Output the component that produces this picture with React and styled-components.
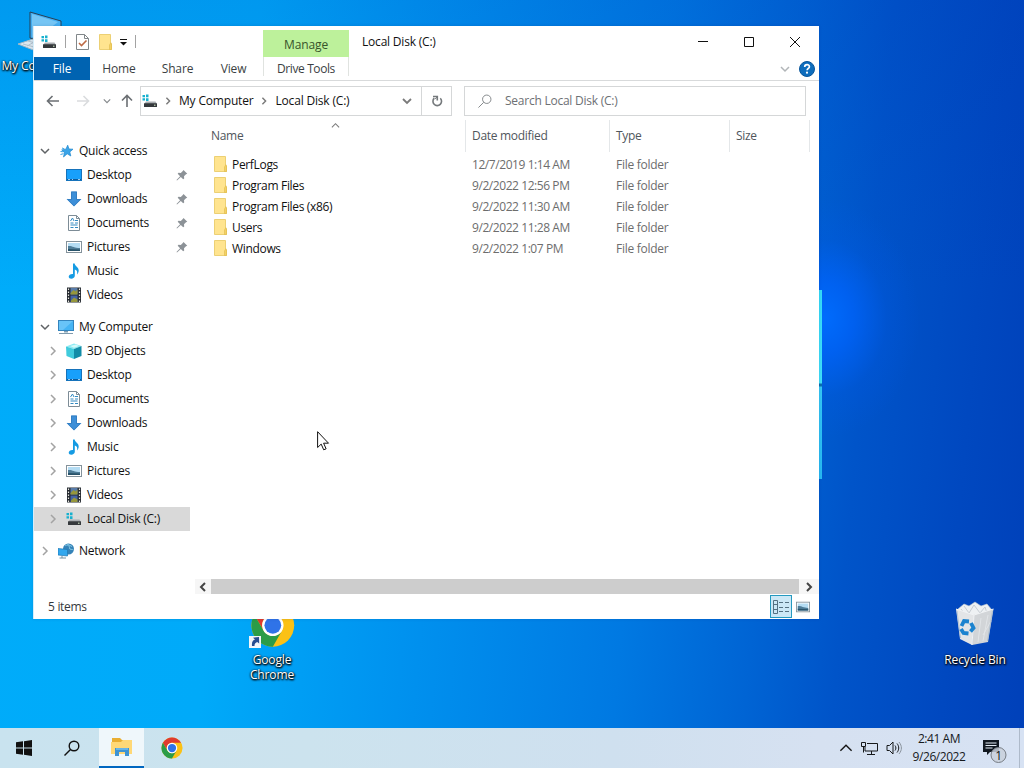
import React from 'react';
import styled, { createGlobalStyle } from 'styled-components';

const GlobalStyle = createGlobalStyle`
  * {
    box-sizing: border-box;
  }

  body {
    margin: 0;
    overflow: hidden;
    font-family: 'Open Sans', 'Noto Sans', sans-serif;
    font-size: 12px;
    line-height: 16px;
    letter-spacing: -0.12px;
    color: #111;
  }

  svg {
    display: block;
    flex: none;
  }
`;

const Screen = styled.div`
  position: relative;
  width: 1024px;
  height: 768px;
  display: flex;
  flex-direction: column;
  overflow: hidden;
  background:
    radial-gradient(ellipse 95px 120px at 825px 318px, rgba(0, 108, 255, 0.95) 0%, rgba(0, 100, 255, 0.7) 30%, rgba(0, 90, 235, 0.25) 65%, rgba(0, 85, 225, 0) 100%),
    linear-gradient(180deg, rgba(0, 50, 180, 0.15) 0%, rgba(0, 50, 180, 0) 38%),
    linear-gradient(95deg, #00acfa 0%, #00aaf9 24%, #0092ef 42%, #0079e2 62%, #0064d4 74%, #0054c9 82%, #0048c0 92%, #0040b9 100%);
`;

const DesktopArea = styled.main`
  position: relative;
  flex: 1;
`;

const Shortcut = styled.div`
  position: absolute;
  left: ${props => props.$x}px;
  top: ${props => props.$y}px;
  width: 76px;
  display: flex;
  flex-direction: column;
  align-items: center;
  color: #fff;
  line-height: 15px;
  text-align: center;
  text-shadow: 1px 1px 2px #000, 0 1px 2px #000, 0 0 2px rgba(0, 0, 0, 0.8);

  svg {
    margin-bottom: ${props => props.$gap || 3}px;
  }
`;

const LogoEdge = styled.div`
  position: absolute;
  left: 819px;
  top: 290px;
  width: 3px;
  height: 189px;
  background: linear-gradient(180deg, #35dcf8 0, #40e0fa 93px, #0b6fae 94px, #0b6fae 96px, #35c8f5 97px, #27b9f2 100%);
`;

const Window = styled.section`
  position: absolute;
  left: 33px;
  top: 26px;
  width: 786px;
  height: 593px;
  display: flex;
  flex-direction: column;
  background: #fff;
  border-left: 1px solid #d4eefb;
  box-shadow: 0 0 3px rgba(0, 30, 90, 0.15);
`;

const Ribbon = styled.header`
  display: flex;
  height: 55px;
  border-bottom: 1px solid #d8dadb;
`;

const RibbonLeft = styled.div`
  width: 229px;
  display: flex;
  flex-direction: column;
`;

const QuickBar = styled.div`
  height: 31px;
  padding-left: 7px;
  display: flex;
  align-items: center;
`;

const QuickItems = styled.div`
  display: flex;
  align-items: center;
  gap: ${props => props.$gap}px;
`;

const QuickDivider = styled.i`
  width: 1px;
  height: 13px;
  background: #a3a3a3;
  margin: 0 ${props => props.$after || 0}px 0 ${props => props.$before}px;
`;

const Tabs = styled.nav`
  height: 23px;
  display: flex;
`;

const Tab = styled.div`
  width: ${props => props.$w}px;
  display: flex;
  align-items: center;
  justify-content: center;
  padding-top: 1px;
  color: ${props => (props.$active ? '#fff' : '#3b3f43')};
  background: ${props => (props.$active ? '#0063b1' : 'transparent')};
`;

const ContextTab = styled.div`
  width: 86px;
  padding-top: 4px;
  text-align: center;
  color: #3b3f43;
`;

const ContextTitle = styled.div`
  height: 27px;
  line-height: 29px;
  background: #bdf19b;
  color: #38542b;
`;

const ContextName = styled.div`
  height: 19px;
  line-height: 24px;
  letter-spacing: -0.4px;
  border: solid #e0e3e0;
  border-width: 0 1px;
`;

const RibbonRight = styled.div`
  flex: 1;
  display: flex;
  flex-direction: column;
`;

const TitleBar = styled.div`
  height: 31px;
  padding: 0 1px 0 13px;
  display: flex;
  align-items: center;
  justify-content: space-between;
  letter-spacing: -0.2px;
`;

const WindowButtons = styled.div`
  display: flex;
`;

const WindowButton = styled.div`
  width: 46px;
  height: 30px;
  display: flex;
  align-items: center;
  justify-content: center;
`;

const RibbonTools = styled.div`
  height: 23px;
  display: flex;
  align-items: center;
  justify-content: flex-end;
  gap: 9px;
  padding-right: 4px;
`;

const Navigation = styled.div`
  height: 39px;
  padding: 5px 13px 4px 12px;
  display: flex;
`;

const NavButtons = styled.div`
  width: 94px;
  display: flex;
  align-items: center;
`;

const AddressBar = styled.div`
  width: 312px;
  height: 30px;
  padding-left: 1px;
  display: flex;
  align-items: center;
  border: 1px solid #d5d7d8;
`;

const Crumb = styled.span`
  margin-left: ${props => props.$left}px;
  margin-right: ${props => props.$right || 0}px;
  white-space: nowrap;
  letter-spacing: -0.18px;
`;

const AddressDrop = styled.div`
  flex: 1;
  height: 100%;
  display: flex;
  align-items: center;
  justify-content: flex-end;
  padding-right: 9px;
`;

const Refresh = styled.div`
  width: 30px;
  height: 100%;
  display: flex;
  align-items: center;
  justify-content: center;
  border-left: 1px solid #d5d7d8;
`;

const Search = styled.div`
  width: 342px;
  height: 30px;
  margin-left: 12px;
  padding-left: 13px;
  display: flex;
  align-items: center;
  gap: 13px;
  border: 1px solid #d5d7d8;
  color: #6d7074;
  letter-spacing: -0.24px;
`;

const Body = styled.div`
  flex: 1;
  display: flex;
  min-height: 0;
`;

const Sidebar = styled.aside`
  width: 161px;
  padding-top: 19px;
`;

const TreeRow = styled.div`
  height: 24px;
  width: 156px;
  margin-top: ${props => (props.$spaced ? 8 : 0)}px;
  padding: 0 2px 0 ${props => (props.$level ? 13 : 5)}px;
  display: flex;
  align-items: center;
  background: ${props => (props.$selected ? '#d9d9d9' : 'transparent')};
`;

const Twisty = styled.span`
  width: 12px;
  display: flex;
  justify-content: center;
`;

const TreeIcon = styled.span`
  width: 16px;
  margin: 0 5px 0 7px;
`;

const TreeText = styled.span`
  flex: 1;
  white-space: nowrap;
  letter-spacing: -0.25px;
`;

const Content = styled.div`
  flex: 1;
  display: flex;
  flex-direction: column;
`;

const columns = '271px 144px 120px 80px';

const HeaderRow = styled.div`
  height: 32px;
  display: grid;
  grid-template-columns: ${columns};
`;

const HeaderCell = styled.div`
  position: relative;
  padding: 8px 0 0 ${props => (props.$first ? 16 : 6)}px;
  color: #50565c;
  letter-spacing: -0.3px;
  border-right: 1px solid #e4e7e9;

  svg {
    position: absolute;
    left: 136px;
    top: 1px;
  }
`;

const Files = styled.div`
  flex: 1;
  padding-top: 2px;
`;

const FileRow = styled.div`
  height: 21px;
  display: grid;
  grid-template-columns: ${columns};
  align-items: center;
`;

const FileName = styled.div`
  display: flex;
  align-items: center;
  gap: 5px;
  padding-left: 19px;
  letter-spacing: -0.33px;

  svg {
    margin: -2px 0 0;
  }
`;

const FileInfo = styled.div`
  padding-left: 6px;
  color: #6d6d6d;
  letter-spacing: ${props => (props.$date ? -0.43 : -0.28)}px;
`;

const ScrollBar = styled.div`
  height: 16px;
  padding-bottom: 1px;
  display: flex;
  align-items: center;
`;

const ScrollArrow = styled.div`
  width: ${props => props.$w}px;
  height: 15px;
  display: flex;
  align-items: center;
  justify-content: center;
  background: #f6f6f6;
`;

const ScrollThumb = styled.div`
  width: 588px;
  height: 15px;
  background: #cdcdcd;
`;

const StatusBar = styled.footer`
  height: 24px;
  padding: 0 5px 0 14px;
  display: flex;
  align-items: center;
  justify-content: space-between;
  color: #33383d;
  letter-spacing: -0.3px;
`;

const ViewButtons = styled.div`
  height: 24px;
  display: flex;
  align-items: flex-start;
`;

const ViewButton = styled.div`
  width: 22px;
  height: 23px;
  display: flex;
  align-items: center;
  justify-content: center;
  border: 1px solid ${props => (props.$active ? '#269ac0' : 'transparent')};
  background: ${props => (props.$active ? '#cce8f6' : 'transparent')};
`;

const Taskbar = styled.footer`
  height: 40px;
  display: flex;
  background: linear-gradient(90deg, #c9e3ef 0%, #cce3ee 30%, #cfe0ef 60%, #d6e1f1 80%, #d7e2f3 100%);
`;

const TaskButton = styled.div`
  width: ${props => props.$w || 48}px;
  height: 40px;
  display: flex;
  align-items: center;
  justify-content: center;
  background: ${props => (props.$active ? '#eff7fb' : 'transparent')};
  border-bottom: ${props => (props.$active ? '2px solid #0067c0' : '0')};
  margin-left: ${props => props.$left || 0}px;
`;

const Tray = styled.div`
  margin-left: auto;
  display: flex;
  align-items: center;
  gap: 8px;
`;

const Clock = styled.div`
  width: 58px;
  margin-right: 6px;
  line-height: 18px;
  text-align: center;
  letter-spacing: -0.45px;
  color: #16191c;
`;

const Notifications = styled.div`
  padding-top: 3px;
  margin-right: 6px;
`;

const ShowDesktop = styled.div`
  width: 5px;
  height: 40px;
  margin-left: -3px;
  border-left: 1px solid #aebaca;
`;

const Pointer = styled.div`
  position: absolute;
  left: 317px;
  top: 431px;
`;

const Chevron = ({ dir = 'right', color = '#7a7a7a', size = 10, weight = 1.5 }) => {
  const paths = {
    right: 'M3 1l4 4-4 4',
    left: 'M7 1L3 5l4 4',
    down: 'M1 3l4 4 4-4',
    up: 'M1 7l4-4 4 4',
  };
  return (
    <svg width={size} height={size} viewBox="0 0 10 10" fill="none" stroke={color} strokeWidth={weight}>
      <path d={paths[dir]} />
    </svg>
  );
};

const DriveIcon = () => (
  <svg width="16" height="16" viewBox="0 0 16 16">
    <path d="M.500 2H3v2.200H.500zM4 1.500h2.500v2.700H4zM.500 5.200H3v2.200H.500zM4 5.200h2.500v2.700H4z" fill="#17b1cf" />
    <path d="M4 8.500h9.500L15 11H2z" fill="#a9adb1" />
    <rect x="2" y="10.200" width="13" height="3.800" rx=".5" fill="#34383b" />
    <rect x="12" y="11.700" width="1.500" height="1" fill="#d7eec8" />
  </svg>
);

const FolderIcon = () => (
  <svg width="13" height="16" viewBox="0 0 13 16">
    <path d="M.5.500h11V9l1 1v5.500H.500z" fill="#ffe48f" stroke="#ecd074" />
    <path d="M10.500 15.500V11l1.300-2.300L12.500 10v5.500z" fill="#f3d265" stroke="#dfba4b" strokeWidth=".6" />
  </svg>
);

const MonitorIcon = () => (
  <svg width="16" height="16" viewBox="0 0 16 16">
    <rect x=".5" y="1.500" width="15" height="10" fill="#45b4f4" stroke="#3484bd" />
    <path d="M1 2h14L5 11H1z" fill="#7bcdfb" opacity=".65" />
    <path d="M6 12h4v1.500H6z" fill="#7f9eb3" />
    <path d="M1 14.500h14" stroke="#7f9aad" />
  </svg>
);

const StarIcon = () => (
  <svg width="16" height="16" viewBox="0 0 16 16">
    <path d="M9.700 2.200l1.300 3.800 4 .2-3.200 2.700 1 4.100-3.600-2.200L5.500 14l1-4.500-2.800-2.600 4.200-.7z" fill="#39a4e8" stroke="#1d86cf" strokeWidth=".7" />
    <path d="M2.500 8.500l3 .3M2.500 11.500l3-.8M4 5l2.500 1" stroke="#3ba1e2" />
  </svg>
);

const DesktopIcon = () => (
  <svg width="16" height="16" viewBox="0 0 16 16">
    <rect x=".5" y="2.500" width="15" height="11" fill="#18a0fb" stroke="#1673bb" />
    <path d="M1 12.500h14" stroke="#0e5b9b" />
    <path d="M2 12.500h2M6 12.500h1M12 12.500h2" stroke="#c4e8ff" strokeWidth=".8" />
  </svg>
);

const DownloadIcon = () => (
  <svg width="16" height="16" viewBox="0 0 16 16">
    <path d="M5 .500h6v7.500h4.500L8 15.500.5 8H5z" fill="#3d8fd8" />
    <path d="M5.500 1h5v7.500h3.800L8 14.800 1.700 8.500h3.800z" fill="none" stroke="#3178ba" strokeWidth=".7" />
  </svg>
);

const DocumentIcon = () => (
  <svg width="16" height="16" viewBox="0 0 16 16">
    <path d="M2.500.5h8l3 3v12h-11z" fill="#fff" stroke="#7d8c96" />
    <path d="M10.500.5v3h3" fill="none" stroke="#7d8c96" />
    <path d="M4.500 6l2-3 1.500 3M9 5.500h3M4.500 8h3M9 8h3M4.500 10h7M4.500 12.500h3M9 12.500h3" fill="none" stroke="#348bc2" />
  </svg>
);

const PictureIcon = ({ width = 16, height = 16 }) => (
  <svg width={width} height={height} viewBox="0 0 16 16">
    <rect x=".5" y="2.500" width="15" height="11" fill="#fff" stroke="#84929b" />
    <path d="M2 4h12v8H2z" fill="#b4dcf3" />
    <path d="M2 7c4-.5 6 2 12 2v3H2z" fill="#4f7d98" />
    <path d="M2 10l12 .5V12H2z" fill="#28536a" />
  </svg>
);

const MusicIcon = () => (
  <svg width="16" height="16" viewBox="0 0 16 16">
    <path d="M7 .5h1.700c.2 3 4 3.500 4 7 0 1.700-.8 3-1.700 4 .5-2.600.3-4.200-2.200-5v6.300c0 1.700-1.700 2.900-3.500 2.900-1.500 0-2.600-.8-2.600-2 0-1.700 2-3 4.300-2.700z" fill="#159be3" />
  </svg>
);

const VideoIcon = () => (
  <svg width="16" height="16" viewBox="0 0 16 16">
    <path d="M1 .5h14v15H1z" fill="#252a31" />
    <path d="M4.500 1h7v6.500h-7z" fill="#587ba8" />
    <path d="M4.500 8.500h7V15h-7z" fill="#4463a5" />
    <path d="M4.500 6l3-3 2 1.500 2-2v5h-7zM5 13.500l3-3 3.500 2V15H5z" fill="#96973b" />
    <path d="M2.500 1.500v14M13.500 1.500v14" stroke="#e8e8e0" strokeWidth="1.200" strokeDasharray="1.500 1.500" />
  </svg>
);

const CubeIcon = () => (
  <svg width="16" height="16" viewBox="0 0 16 16">
    <path d="M0 3.500L8 .5l7.500 2.500L8 6z" fill="#8cebf3" />
    <path d="M0 3.500L8 6v10L.5 13z" fill="#40cbdc" />
    <path d="M8 6l7.500-3v10L8 16z" fill="#128ca7" />
    <path d="M4 3l6-1.500L13 3l-5 1.700z" fill="#d6fafa" />
  </svg>
);

const NetworkIcon = () => (
  <svg width="17" height="16" viewBox="0 0 17 16">
    <circle cx="10.500" cy="6" r="5.500" fill="#3583b8" />
    <path d="M7 3c2-2 5 0 4.500 2S15 6 15.500 7M9 1l3 1.500 2 1" fill="none" stroke="#86c8e4" strokeWidth="1" />
    <path d="M0 5.500l9.500 1v6.500L0 12z" fill="#31a7ee" stroke="#1c77b3" strokeWidth=".7" />
    <path d="M4 13v2h-2.500M4 15h4" fill="none" stroke="#7391a2" />
  </svg>
);

const PinIcon = () => (
  <svg width="12" height="12" viewBox="0 0 12 12">
    <path d="M7.500 1l3.800 3.700-1.300.5-2 2 .2 2.300-1 .8-2.400-2.400L1 11.500.500 11l3.600-3.800L1.700 4.800l.8-1 2.300.2 2-2z" fill="#8c9297" />
  </svg>
);

const ArrowIcon = ({ dir, color = '#6b6f73' }) => (
  <svg width="14" height="14" viewBox="0 0 14 14" fill="none" stroke={color} strokeWidth="1.600">
    {dir === 'left' && <path d="M13 7H1.500M6.500 2l-5 5 5 5" />}
    {dir === 'right' && <path d="M1 7h11.500M7.500 2l5 5-5 5" />}
    {dir === 'up' && <path d="M7 13V1.500M2 6.500l5-5 5 5" />}
  </svg>
);

const RefreshIcon = () => (
  <svg width="14" height="14" viewBox="0 0 14 14" fill="none" stroke="#75797c" strokeWidth="1.600">
    <path d="M10.300 4.300A4.300 4.300 0 1 1 4.300 4.200" />
    <path d="M3 2.500h4.300v4" />
    <path d="M7.300 2.800L5 5.200" strokeWidth="1" />
  </svg>
);

const MagnifierIcon = ({ size = 15, color = '#767a7e', weight = 1 }) => (
  <svg width={size} height={size} viewBox="0 0 16 16" fill="none" stroke={color} strokeWidth={weight}>
    <circle cx="10" cy="6" r="4.800" />
    <path d="M6.500 9.500L.5 15.500" />
  </svg>
);

const ChromeDisc = () => (
  <>
    <circle cx="24" cy="24" r="23" fill="#fbc116" />
    <path d="M4.100 12.500A23 23 0 0 1 43.900 12.500H24a11.500 11.500 0 0 0-10 17.200z" fill="#df3b2f" />
    <path d="M4.100 12.500L14 29.700a11.500 11.500 0 0 0 20 0L24 47A23 23 0 0 1 4.100 12.500z" fill="#2b9c48" />
    <circle cx="24" cy="24" r="11.500" fill="#fff" />
    <circle cx="24" cy="24" r="9" fill="#2f73e8" />
  </>
);

const ChromeIcon = ({ size }) => (
  <svg width={size} height={size} viewBox="0 0 48 48">
    <ChromeDisc />
  </svg>
);

const ChromeShortcutIcon = () => (
  <svg width="48" height="48" viewBox="0 0 48 48">
    <g transform="translate(2.500 2) scale(.93)">
      <ChromeDisc />
    </g>
    <path d="M1 35h12v12H1z" fill="#f3f6f9" />
    <path d="M4 45c-.5-4 1-6 3-6.500l-2-1.800 6-.7.2 6.500-2-1.500c-2 .7-2.700 2-2.700 4z" fill="#284d91" />
  </svg>
);

const RecycleIcon = () => (
  <svg width="42" height="46" viewBox="0 0 42 46">
    <path d="M4 8l6-5 5 2 6-4 6 4 6-2 5 6-1 10H6z" fill="#eef1f3" stroke="#bcc6ce" strokeWidth=".6" />
    <path d="M10 5l5 7 5-8 6 8 5-6 3 9M7 8l6 8 8-2 8 3" fill="none" stroke="#c6ccd2" />
    <path d="M2 8L20 14l-2 30L6 38z" fill="#e3e5e7" />
    <path d="M20 14l19.500-6L34 41l-16 3z" fill="#d2d5d8" />
    <path d="M2 8L20 14l19.500-6M20 14l-2 30" fill="none" stroke="#f0f2f4" />
    <path d="M27 17l-3 24M34 14l-5 26M37 20l-8 14" stroke="#e6e9ec" opacity=".8" />
    <path d="M38.500 10L33.500 40M3 10l3.500 27" stroke="#9fb6cb" strokeWidth=".7" />
    <g fill="none" stroke="#1c83cf" strokeWidth="3.800">
      <path d="M7.500 25l2.500-5 5 .5" />
      <path d="M17 22l2.500 5-3 3.500" />
      <path d="M7 28l2.500 4 5 .5" />
    </g>
  </svg>
);

const ComputerIcon = () => (
  <svg width="48" height="45" viewBox="0 0 48 45">
    <path d="M15 1l31 9v24l-31-7z" fill="#43aef2" stroke="#273f55" strokeWidth="1" />
    <path d="M17 3l26 8-21 16-5-1z" fill="#75c5f4" />
    <path d="M3 33l15-5 24 7-16 7z" fill="#dde8ef" stroke="#a3b8c6" />
    <path d="M8 33l22 6M13 30l22 6M12 35l9-5" stroke="#b0c1cc" />
  </svg>
);

const ExplorerIcon = () => (
  <svg width="22" height="20" viewBox="0 0 22 20">
    <path d="M1 1h8l2 2h9l1 1v13H1z" fill="#e9ae32" />
    <path d="M0 5h10l2-2h9v14H0z" fill="#ffd876" />
    <path d="M4 19v-8h14v8h-4v-4H8v4z" fill="#3d93d3" />
    <path d="M5 11h12v2H5z" fill="#68b4e5" />
  </svg>
);

const quickAccess = [
  { name: 'Desktop', icon: DesktopIcon, pinned: true },
  { name: 'Downloads', icon: DownloadIcon, pinned: true },
  { name: 'Documents', icon: DocumentIcon, pinned: true },
  { name: 'Pictures', icon: PictureIcon, pinned: true },
  { name: 'Music', icon: MusicIcon },
  { name: 'Videos', icon: VideoIcon },
];

const computer = [
  { name: '3D Objects', icon: CubeIcon },
  { name: 'Desktop', icon: DesktopIcon },
  { name: 'Documents', icon: DocumentIcon },
  { name: 'Downloads', icon: DownloadIcon },
  { name: 'Music', icon: MusicIcon },
  { name: 'Pictures', icon: PictureIcon },
  { name: 'Videos', icon: VideoIcon },
  { name: 'Local Disk (C:)', icon: DriveIcon, selected: true },
];

const files = [
  { name: 'PerfLogs', date: '12/7/2019 1:14 AM' },
  { name: 'Program Files', date: '9/2/2022 12:56 PM' },
  { name: 'Program Files (x86)', date: '9/2/2022 11:30 AM' },
  { name: 'Users', date: '9/2/2022 11:28 AM' },
  { name: 'Windows', date: '9/2/2022 1:07 PM' },
];

function TreeItem({ name, icon: Icon, level = 1, twisty, pinned, selected, spaced }) {
  return (
    <TreeRow $level={level} $selected={selected} $spaced={spaced}>
      <Twisty>
        {twisty && <Chevron dir={twisty} color={twisty === 'down' ? '#5f6265' : '#a3a3a3'} />}
      </Twisty>
      <TreeIcon>
        <Icon />
      </TreeIcon>
      <TreeText>{name}</TreeText>
      {pinned && <PinIcon />}
    </TreeRow>
  );
}

function ExplorerRibbon() {
  return (
    <Ribbon>
      <RibbonLeft>
        <QuickBar>
          <DriveIcon />
          <QuickDivider $before={8} $after={10} />
          <QuickItems $gap={8}>
            <QuickItems $gap={10}>
              <svg width="13" height="16" viewBox="0 0 13 16" fill="none">
                <path d="M.5.5h8l4 4v11H.500z" fill="#fff" stroke="#81878a" />
                <path d="M8.500.5v4h4" stroke="#81878a" />
                <path d="M3 9l2.500 2.500 5-5" stroke="#bd6a45" strokeWidth="1.600" />
              </svg>
              <FolderIcon />
            </QuickItems>
            <svg width="9" height="8" viewBox="1 0 9 8">
              <path d="M1 1.500h7" stroke="#111" />
              <path d="M1 4h7L4.500 7.500z" fill="#111" />
            </svg>
          </QuickItems>
          <QuickDivider $before={6} />
        </QuickBar>
        <Tabs>
          <Tab $w={56} $active>File</Tab>
          <Tab $w={58}>Home</Tab>
          <Tab $w={59}>Share</Tab>
          <Tab $w={53}>View</Tab>
        </Tabs>
      </RibbonLeft>
      <ContextTab>
        <ContextTitle>Manage</ContextTitle>
        <ContextName>Drive Tools</ContextName>
      </ContextTab>
      <RibbonRight>
        <TitleBar>
          <span>Local Disk (C:)</span>
          <WindowButtons>
            <WindowButton>
              <svg width="10" height="10" viewBox="0 0 10 10" stroke="#111"><path d="M0 4.500h10" /></svg>
            </WindowButton>
            <WindowButton>
              <svg width="10" height="10" viewBox="0 0 10 10" stroke="#111" fill="none"><path d="M.5.500h9v9h-9z" /></svg>
            </WindowButton>
            <WindowButton>
              <svg width="10" height="10" viewBox="0 0 10 10" stroke="#111"><path d="M0 0l10 10M10 0L0 10" /></svg>
            </WindowButton>
          </WindowButtons>
        </TitleBar>
        <RibbonTools>
          <Chevron dir="down" color="#b1b5b8" />
          <svg width="16" height="16" viewBox="0 0 16 16">
            <circle cx="8" cy="8" r="7.500" fill="#0e6dbd" stroke="#09569b" />
            <path d="M5.700 6c0-3 4.700-3 4.700-.3 0 1.600-2.300 1.700-2.300 3.600" fill="none" stroke="#fff" strokeWidth="1.700" />
            <circle cx="8" cy="11.700" r="1.100" fill="#fff" />
          </svg>
        </RibbonTools>
      </RibbonRight>
    </Ribbon>
  );
}

function NavigationRow() {
  return (
    <Navigation>
      <NavButtons>
        <ArrowIcon dir="left" />
        <Crumb $left={16} $right={13}><ArrowIcon dir="right" color="#dadcde" /></Crumb>
        <Chevron dir="down" size={8} color="#85898c" />
        <Crumb $left={9}><ArrowIcon dir="up" /></Crumb>
      </NavButtons>
      <AddressBar>
        <DriveIcon />
        <Crumb $left={6} $right={6}><Chevron size={8} weight={1.8} /></Crumb>
        <Crumb $left={1} $right={7}>My Computer</Crumb>
        <Chevron size={8} weight={1.8} />
        <Crumb $left={7}>Local Disk (C:)</Crumb>
        <AddressDrop><Chevron dir="down" weight={1.8} /></AddressDrop>
        <Refresh><RefreshIcon /></Refresh>
      </AddressBar>
      <Search>
        <MagnifierIcon size={14} />
        <span>Search Local Disk (C:)</span>
      </Search>
    </Navigation>
  );
}

function Explorer() {
  return (
    <Window>
      <ExplorerRibbon />
      <NavigationRow />
      <Body>
        <Sidebar>
          <TreeItem name="Quick access" icon={StarIcon} level={0} twisty="down" />
          {quickAccess.map(item => <TreeItem key={item.name} {...item} />)}
          <TreeItem name="My Computer" icon={MonitorIcon} level={0} twisty="down" spaced />
          {computer.map(item => <TreeItem key={item.name} twisty="right" {...item} />)}
          <TreeItem name="Network" icon={NetworkIcon} level={0} twisty="right" spaced />
        </Sidebar>
        <Content>
          <HeaderRow>
            <HeaderCell $first>
              Name
              <Chevron dir="up" size={9} weight={1.2} />
            </HeaderCell>
            <HeaderCell>Date modified</HeaderCell>
            <HeaderCell>Type</HeaderCell>
            <HeaderCell>Size</HeaderCell>
          </HeaderRow>
          <Files>
            {files.map(file => (
              <FileRow key={file.name}>
                <FileName><FolderIcon />{file.name}</FileName>
                <FileInfo $date>{file.date}</FileInfo>
                <FileInfo>File folder</FileInfo>
              </FileRow>
            ))}
          </Files>
          <ScrollBar>
            <ScrollArrow $w={16}><Chevron dir="left" color="#444" weight={2} /></ScrollArrow>
            <ScrollThumb />
            <ScrollArrow $w={20}><Chevron color="#444" weight={2} /></ScrollArrow>
          </ScrollBar>
        </Content>
      </Body>
      <StatusBar>
        <span>5 items</span>
        <ViewButtons>
          <ViewButton $active>
            <svg width="16" height="14" viewBox="0 0 16 14" fill="none" stroke="#557181">
              <path d="M.5.500h4v13h-4zM.5 4.500h4M.5 9.500h4M6 2.500h4M12 2.500h4M6 7.500h4M12 7.500h4M6 11.500h4M12 11.500h4" />
            </svg>
          </ViewButton>
          <ViewButton><PictureIcon width={14} height={14} /></ViewButton>
        </ViewButtons>
      </StatusBar>
    </Window>
  );
}

function SystemTray() {
  return (
    <Tray>
      <Chevron dir="up" size={14} color="#171717" weight={1} />
      <svg width="17" height="16" viewBox="0 0 17 16" fill="none" stroke="#17191b">
        <path d="M6 3.500h10.500v7.500H4V7M10.500 11v3M6 14.500h8M.5 2.500h4v4h-4zM2.500 6.500v6" />
      </svg>
      <svg width="16" height="16" viewBox="0 0 16 16" fill="none" stroke="#17191b">
        <path d="M1 5.500h2.500L7 2v12l-3.500-3.500H1zM9 5.500c1.200 1.500 1.200 3.500 0 5M11 3.500c2.300 2.700 2.300 6.300 0 9" />
        <path d="M13 2c3.200 4 3.200 8 0 12" stroke="#8b949e" />
      </svg>
      <Clock>
        <div>2:41 AM</div>
        <div>9/26/2022</div>
      </Clock>
      <Notifications>
        <svg width="26" height="26" viewBox="0 0 26 26">
          <path d="M1 3h16v12H8l-3 3v-3H1z" fill="#111820" />
          <path d="M3.500 6h11M3.500 8.500h11M3.500 11h7" stroke="#e4ecf5" />
          <circle cx="16.500" cy="18" r="7.500" fill="#c9d0da" fillOpacity=".85" stroke="#777d84" />
          <text x="16.500" y="22.500" fontSize="12" textAnchor="middle" fill="#111">1</text>
        </svg>
      </Notifications>
      <ShowDesktop />
    </Tray>
  );
}

export default function App() {
  return (
    <>
      <GlobalStyle />
      <Screen>
        <DesktopArea>
          <Shortcut $x={1} $y={11} $gap={2}>
            <ComputerIcon />
            <span>My Computer</span>
          </Shortcut>
          <Shortcut $x={234} $y={601}>
            <ChromeShortcutIcon />
            <span>Google<br />Chrome</span>
          </Shortcut>
          <Shortcut $x={937} $y={601} $gap={5}>
            <RecycleIcon />
            <span>Recycle Bin</span>
          </Shortcut>
          <LogoEdge />
          <Explorer />
          <Pointer>
            <svg width="14" height="21" viewBox="0 0 14 21">
              <path d="M.6.700v15.800l3.600-3.400 2.500 5.700 2.400-1-2.500-5.600h4.900z" fill="#fff" stroke="#111" strokeWidth="1" />
            </svg>
          </Pointer>
        </DesktopArea>
        <Taskbar>
          <TaskButton>
            <svg width="16" height="16" viewBox="0 0 16 16" fill="#111">
              <path d="M0 2.300L7 1.300v6.200H0zM8 1.200L16 0v7.500H8zM0 8.500h7v6.200l-7-1zM8 8.500h8V16l-8-1.200z" />
            </svg>
          </TaskButton>
          <TaskButton><MagnifierIcon size={16} color="#111" weight={1.4} /></TaskButton>
          <TaskButton $w={45} $left={3} $active><ExplorerIcon /></TaskButton>
          <TaskButton $w={56}><ChromeIcon size={22} /></TaskButton>
          <SystemTray />
        </Taskbar>
      </Screen>
    </>
  );
}
